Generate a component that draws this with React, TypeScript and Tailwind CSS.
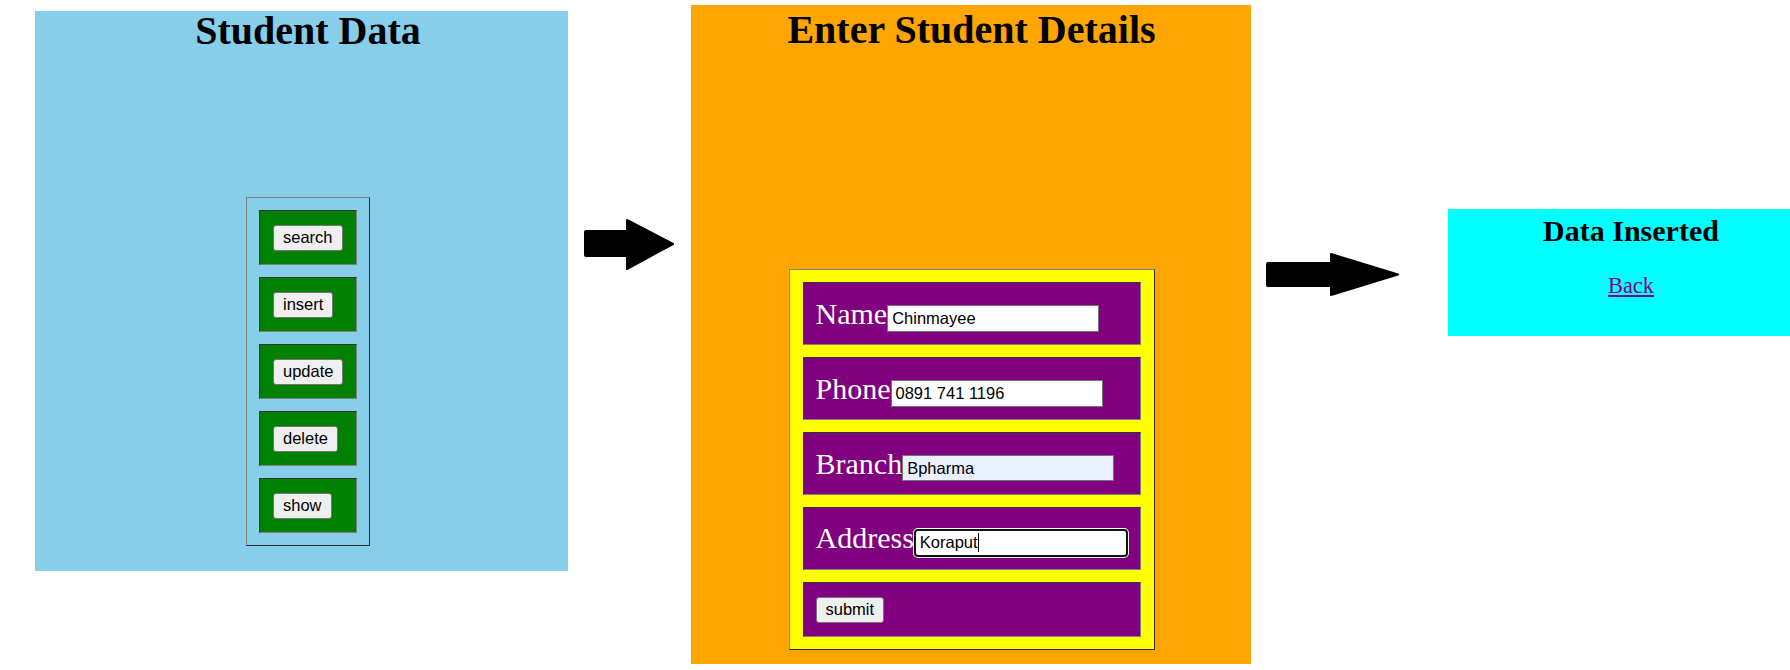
import React from "react";

const serif = "font-['Liberation_Serif','Times_New_Roman',serif]";
const sans = "font-['Liberation_Sans',Arial,sans-serif]";

function NativeButton({ label }: { label: string }) {
  return (
    <button
      type="button"
      className={`${sans} h-[26px] px-[9px] text-[16.5px] leading-none text-black bg-[#efefef] border border-[#767676] rounded-[3px] flex items-center`}
    >
      {label}
    </button>
  );
}

function MenuCell({ label }: { label: string }) {
  return (
    <div className="w-[98px] h-[55px] bg-[#008000] border border-t-[#333333] border-l-[#333333] border-r-[#808080] border-b-[#808080] flex items-center pl-[13px]">
      <NativeButton label={label} />
    </div>
  );
}

function FieldRow({
  label,
  value,
  variant,
}: {
  label: string;
  value: string;
  variant?: "autofill" | "focus";
}) {
  let inputCls =
    "w-[212px] h-[27px] bg-white border border-[#767676] pl-[4px] flex items-center";
  if (variant === "autofill")
    inputCls =
      "w-[212px] h-[26px] bg-[#e8f0fe] border border-[#767676] pl-[4px] flex items-center";
  if (variant === "focus")
    inputCls =
      "w-[214px] h-[28px] bg-white border-2 border-[#111111] rounded-[4px] shadow-[0_0_0_1px_#ffffff] pl-[4px] flex items-center";
  return (
    <div className="w-[338px] h-[63px] bg-[#800080] border border-t-[#333333] border-l-[#333333] border-r-[#808080] border-b-[#808080] flex items-center pl-[12px]">
      <div className="flex items-baseline">
        <span className={`${serif} text-[30px] leading-[35px] text-white`}>{label}</span>
        <div className={inputCls}>
          <span className={`${sans} text-[16.5px] leading-[19px] text-black`}>{value}</span>
          {variant === "focus" && <span className="w-px h-[19px] bg-black" />}
        </div>
      </div>
    </div>
  );
}

function Arrow1() {
  return (
    <svg width="92" height="53" viewBox="0 0 92 53" className="shrink-0 mt-[218px] ml-[15px]">
      <rect x="1" y="12" width="44" height="27" rx="2" fill="#000" />
      <polygon
        points="44,2 90,26 44,51"
        fill="#000"
        stroke="#000"
        strokeWidth="2"
        strokeLinejoin="round"
      />
    </svg>
  );
}

function Arrow2() {
  return (
    <svg width="135" height="45" viewBox="0 0 135 45" className="shrink-0 mt-[252px] ml-[14px]">
      <rect x="1" y="10" width="67" height="25" rx="2" fill="#000" />
      <polygon
        points="66,2 133,22.5 66,43"
        fill="#000"
        stroke="#000"
        strokeWidth="2"
        strokeLinejoin="round"
      />
    </svg>
  );
}

export default function App() {
  return (
    <div className="w-[1790px] h-[670px] overflow-hidden bg-white flex items-start pl-[35px]">
      {/* Panel 1 */}
      <div className="mt-[11px] w-[533px] h-[560px] shrink-0 bg-[#87ceeb] flex flex-col items-center pl-[13px]">
        <h1 className={`${serif} text-[40px] font-bold leading-[40px] text-black`}>Student Data</h1>
        <div className="mt-[146px] w-[124px] border border-t-[#808080] border-l-[#808080] border-r-[#2b2b2b] border-b-[#2b2b2b] p-[12px] flex flex-col gap-[12px]">
          <MenuCell label="search" />
          <MenuCell label="insert" />
          <MenuCell label="update" />
          <MenuCell label="delete" />
          <MenuCell label="show" />
        </div>
      </div>

      <Arrow1 />

      {/* Panel 2 */}
      <div className="ml-[16px] mt-[5px] w-[560px] h-[659px] shrink-0 bg-[#ffa500] flex flex-col items-center pl-[1px] pt-[5px]">
        <h1 className={`${serif} text-[40px] font-bold leading-[40px] text-black`}>
          Enter Student Details
        </h1>
        <div className="mt-[219px] w-[366px] bg-[#ffff00] border border-t-[#808080] border-l-[#808080] border-r-[#2b2b2b] border-b-[#2b2b2b] px-[13px] py-[12px] flex flex-col gap-[12px]">
          <FieldRow label="Name" value="Chinmayee" />
          <FieldRow label="Phone" value="0891 741 1196" />
          <FieldRow label="Branch" value="Bpharma" variant="autofill" />
          <FieldRow label="Address" value="Koraput" variant="focus" />
          <div className="w-[338px] h-[55px] bg-[#800080] border border-t-[#333333] border-l-[#333333] border-r-[#808080] border-b-[#808080] flex items-center pl-[12px]">
            <NativeButton label="submit" />
          </div>
        </div>
      </div>

      <Arrow2 />

      {/* Panel 3 */}
      <div className="ml-[48px] mt-[209px] w-[364px] h-[127px] shrink-0 bg-[#00ffff] flex flex-col items-center pl-[2px]">
        <h2 className={`${serif} mt-[7px] text-[30px] font-bold leading-[30px] text-black`}>
          Data Inserted
        </h2>
        <a
          href="#"
          className={`${serif} mt-[27px] text-[22.5px] leading-[26px] text-[#800080] underline`}
        >
          Back
        </a>
      </div>
    </div>
  );
}
